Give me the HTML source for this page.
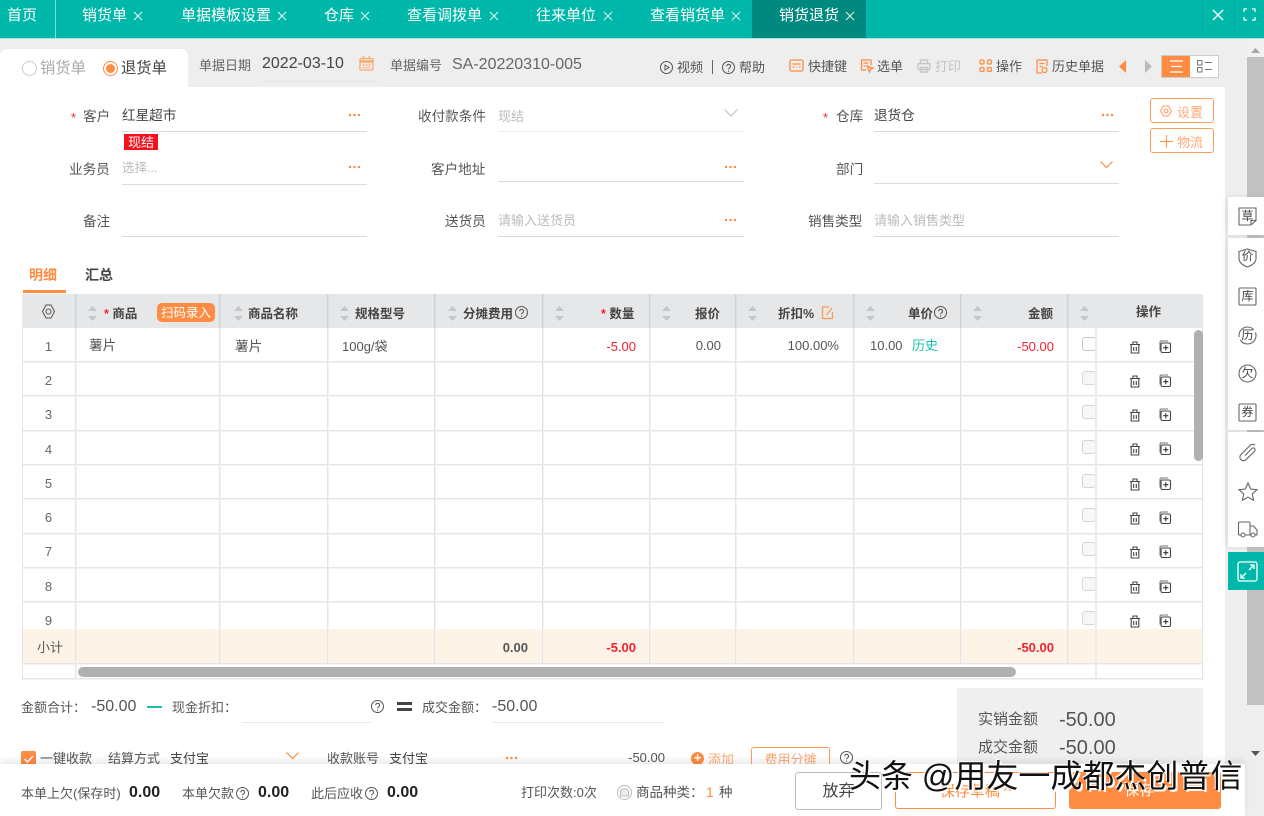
<!DOCTYPE html>
<html lang="zh"><head><meta charset="utf-8"><title>销货退货</title>
<style>
html,body{margin:0;padding:0}
body{width:1264px;height:816px;overflow:hidden;position:relative;background:#eee;font-family:"Liberation Sans","Noto Sans CJK SC",sans-serif;font-size:13px;color:#555}
.a,.t,.r,.c{position:absolute}
.t,.r,.c{white-space:nowrap;line-height:20px}
.r{text-align:right}.c{text-align:center}
.lb{font-size:13.600px}
.tab{position:absolute;top:0;height:38px;line-height:32px;color:#fff;font-size:15px;white-space:nowrap}
.ln{position:absolute;height:1px;background:#dcdcdc}
.h{position:absolute;height:2px;background:linear-gradient(#e6e6e6 50%,#f3f3f3 50%);left:22px;width:1181px}
.v{position:absolute;width:2px;top:294px;height:369px;background:linear-gradient(#cfd1d3 34px,#e4e4e4 34px) 0 0/1px 100% no-repeat,linear-gradient(#dcdde0 34px,#f2f2f2 34px) 1px 0/1px 100% no-repeat}
.th{position:absolute;top:304px;font-weight:bold;color:#444;font-size:12.500px;line-height:20px;white-space:nowrap}
.sort{position:absolute;top:306px;width:9px;height:15px}
.n{position:absolute;left:22px;width:53px;text-align:center;color:#666;line-height:20px}
.red{color:#f5222d}.or{color:#ff8c42}.gr{color:#bbb}
.dots{position:absolute;width:13px;height:4px;background:radial-gradient(circle at 2px 2px,#ff8c42 1.100px,transparent 1.400px) 0 0/4.500px 4px repeat-x}
.cb{position:absolute;left:1082px;width:14px;height:14px;border:1px solid #d5d5d5;border-radius:3px;background:#f7f7f7;box-sizing:border-box}
svg{position:absolute;overflow:visible}
.side{fill:none;stroke:#666;stroke-width:1.100}
.x{fill:none;stroke:#fff;stroke-width:1;opacity:.9}
</style></head><body>
<svg width="0" height="0" style="position:absolute"><defs>
<g id="trash" fill="none" stroke="#444" stroke-width="1.100"><path d="M1 3.500h10M4 3V1h4v2M2.200 3.500V12h7.600V3.500M4.700 6v4M7.300 6v4"/></g>
<g id="copy" fill="none" stroke="#555" stroke-width="1.100"><path d="M2 10.500V2.500a1.500 1.500 0 0 1 1.500-1.500H10" stroke="#777"/><rect x="3" y="3" width="9.500" height="9.500" rx="1.500" fill="#fff" stroke="#444"/><path d="M5.300 7.700h5M7.800 5.300v5" stroke="#333"/></g>
<g id="sortg"><path d="M4.500 0L9 5H0z" fill="#c4c6c9"/><path d="M4.500 15L9 10H0z" fill="#c4c6c9"/></g>
<g id="q" fill="none" stroke="#555" stroke-width="1"><circle cx="6.500" cy="6.500" r="6"/><path d="M4.700 5.200a1.900 1.900 0 1 1 2.800 1.700c-.7.400-1 .7-1 1.500M6.500 9.600v1.100"/></g>
<g id="tx"><path class="x" d="M0 0l8 8M8 0L0 8"/></g>
</defs></svg>

<!-- top bar -->
<div class="a" style="left:0;top:0;width:1264px;height:38px;background:#00b8a9"></div>
<div class="a" style="left:0;top:38px;width:1264px;height:1px;background:#a9e3dd"></div>
<div class="a" style="left:55px;top:0;width:1px;height:38px;background:#7fdcd4"></div>
<div class="a" style="left:752px;top:0;width:114px;height:38px;background:#00897e"></div>
<div class="a" style="left:1202px;top:0;width:1px;height:38px;background:#0aa99b"></div>
<div class="a" style="left:1234px;top:0;width:1px;height:38px;background:#0aa99b"></div>
<div class="tab" style="left:7px">首页</div>
<div class="tab" style="left:82px">销货单</div><svg style="left:134px;top:12px" width="8" height="8"><use href="#tx"/></svg>
<div class="tab" style="left:181px">单据模板设置</div><svg style="left:278px;top:12px" width="8" height="8"><use href="#tx"/></svg>
<div class="tab" style="left:324px">仓库</div><svg style="left:361px;top:12px" width="8" height="8"><use href="#tx"/></svg>
<div class="tab" style="left:407px">查看调拨单</div><svg style="left:490px;top:12px" width="8" height="8"><use href="#tx"/></svg>
<div class="tab" style="left:536px">往来单位</div><svg style="left:604px;top:12px" width="8" height="8"><use href="#tx"/></svg>
<div class="tab" style="left:650px">查看销货单</div><svg style="left:732px;top:12px" width="8" height="8"><use href="#tx"/></svg>
<div class="tab" style="left:779px">销货退货</div><svg style="left:846px;top:12px" width="8" height="8"><use href="#tx"/></svg>
<svg style="left:1212px;top:9px" width="12" height="12" fill="none" stroke="#fff" stroke-width="1.300"><path d="M1 1l10 10M11 1L1 11"/></svg>
<svg style="left:1243px;top:8px" width="13" height="13" fill="none" stroke="#fff" stroke-width="1.200"><path d="M1 4V1h3M9 1h3v3M12 9v3H9M4 12H1V9"/></svg>

<!-- page scrollbar -->
<div class="a" style="left:1247px;top:39px;width:17px;height:18px;background:#f1f1f1"></div>
<div class="a" style="left:1247px;top:57px;width:17px;height:648px;background:#c1c1c1"></div>
<svg style="left:1251px;top:48px" width="9" height="5"><path d="M4.500 0L9 5H0z" fill="#a5a5a5"/></svg>
<svg style="left:1251px;top:751px" width="9" height="5"><path d="M4.500 5L9 0H0z" fill="#555"/></svg>

<!-- main panel -->
<div class="a" style="left:0;top:87px;width:1225px;height:680px;background:#fff"></div>
<div class="a" style="left:0;top:49px;width:188px;height:45px;background:#fff;border-radius:7px 7px 0 0"></div>

<!-- toolbar -->
<div class="a" style="left:22px;top:61px;width:13px;height:13px;border:1px solid #ccc;border-radius:50%"></div>
<div class="t" style="left:40px;top:59px;font-size:15.300px;color:#aaa">销货单</div>
<div class="a" style="left:103px;top:61px;width:13px;height:13px;border:1px solid #ff8c42;border-radius:50%"></div>
<div class="a" style="left:106px;top:64px;width:9px;height:9px;background:#ff8c42;border-radius:50%"></div>
<div class="t" style="left:121px;top:59px;font-size:15.300px;color:#444">退货单</div>
<div class="t" style="left:199px;top:56px;color:#666">单据日期</div>
<div class="t" style="left:262px;top:54px;font-size:16px;color:#444">2022-03-10</div>
<div class="ln" style="left:261px;top:81px;width:118px;background:#e8e8e8"></div>
<svg style="left:359px;top:56px" width="15" height="15" fill="none" stroke="#ffa86b" stroke-width="1.300"><rect x="1" y="2.500" width="13" height="11.500" rx="1"/><path d="M1 5.500h13" stroke-width="2.500"/><path d="M4.500 0v3M10.500 0v3M3.500 9h8M3.500 11.500h8" stroke-dasharray="2 1"/></svg>
<div class="t" style="left:390px;top:56px;color:#666">单据编号</div>
<div class="t" style="left:452px;top:55px;font-size:16px;color:#666">SA-20220310-005</div>

<svg style="left:660px;top:61px" width="13" height="13" fill="none" stroke="#555"><circle cx="6.500" cy="6.500" r="6"/><path d="M5 4l4 2.500L5 9z"/></svg>
<div class="t" style="left:677px;top:58px">视频</div>
<div class="a" style="left:712px;top:60px;width:1px;height:14px;background:#666"></div>
<svg style="left:722px;top:61px" width="13" height="13"><use href="#q"/></svg>
<div class="t" style="left:739px;top:58px">帮助</div>
<svg style="left:789px;top:59px" width="15" height="14" fill="none" stroke="#ff8c42" stroke-width="1.300"><rect x="1" y="1" width="13" height="11" rx="1.500"/><path d="M3.500 5h8M3.500 8h2M7 8h1M10 8h1.500"/></svg>
<div class="t" style="left:808px;top:57px">快捷键</div>
<svg style="left:860px;top:59px" width="14" height="14" fill="none" stroke="#ff8c42" stroke-width="1.300"><path d="M6 11H1.500V1H11v5M3.500 4h5M3.500 7h2"/><path d="M7 7l6 2.200-2.400 1L9.500 13z"/></svg>
<div class="t" style="left:877px;top:57px">选单</div>
<svg style="left:917px;top:59px" width="14" height="14" fill="none" stroke="#c8c8c8" stroke-width="1.500"><rect x="1" y="4.500" width="12" height="6" rx="1.500"/><path d="M3.500 4.500V1h7v3.500M3.500 8.500h7V13h-7z"/></svg>
<div class="t" style="left:935px;top:57px;color:#c4c4c4">打印</div>
<svg style="left:979px;top:59px" width="14" height="14" fill="none" stroke="#ff8c42" stroke-width="1.300"><rect x="1" y="1" width="4" height="4" rx="1.200"/><rect x="8.500" y="1" width="4" height="4" rx="1.200"/><rect x="1" y="8.500" width="4" height="4" rx="1.200"/><rect x="8.500" y="8.500" width="4" height="4" rx="1.200"/></svg>
<div class="t" style="left:996px;top:57px">操作</div>
<svg style="left:1036px;top:59px" width="12" height="15" fill="none" stroke="#ff8c42" stroke-width="1.200"><path d="M1 1h10v6M1 1v13h5M3.500 4.500h5M3.500 7.500h3"/><circle cx="8.500" cy="11" r="2.500"/></svg>
<div class="t" style="left:1052px;top:57px">历史单据</div>
<svg style="left:1119px;top:60px" width="8" height="13"><path d="M7 0v13L0 6.500z" fill="#ff8c42"/></svg>
<svg style="left:1145px;top:60px" width="8" height="13"><path d="M0 0v13l7-6.500z" fill="#bbb"/></svg>
<div class="a" style="left:1161px;top:55px;width:58px;height:23px;background:#ccc"></div>
<div class="a" style="left:1162px;top:56px;width:28px;height:21px;background:#ff8c42"></div>
<div class="a" style="left:1190px;top:56px;width:28px;height:21px;background:#fff"></div>
<svg style="left:1170px;top:60px" width="13" height="13" stroke="#fff" stroke-width="1.200"><path d="M0 1h13M1 6.500h11M0 12h13"/></svg>
<svg style="left:1197px;top:60px" width="15" height="13" fill="none" stroke="#777"><rect x=".5" y=".5" width="4.500" height="4.500"/><rect x=".5" y="7.500" width="4.500" height="4.500"/><path d="M8 2.500h7M8 9.500h7"/></svg>

<!-- form -->
<div class="t red" style="left:71px;top:108px">*</div>
<div class="t lb" style="left:83px;top:107px">客户</div>
<div class="t lb" style="left:122px;top:106px;color:#444">红星超市</div>
<div class="dots" style="left:348px;top:113px"></div>
<div class="ln" style="left:122px;top:131px;width:245px"></div>
<div class="a" style="left:124px;top:134px;width:34px;height:16px;background:#f5101e;color:#fff;text-align:center;line-height:17px">现结</div>
<div class="t lb" style="left:69px;top:160px">业务员</div>
<div class="t gr" style="left:122px;top:158px;font-size:12.500px">选择...</div>
<div class="dots" style="left:348px;top:165px"></div>
<div class="ln" style="left:122px;top:184px;width:245px"></div>
<div class="t lb" style="left:83px;top:212px">备注</div>
<div class="ln" style="left:122px;top:236px;width:245px"></div>

<div class="t lb" style="left:418px;top:107px">收付款条件</div>
<div class="t gr" style="left:498px;top:107px">现结</div>
<svg style="left:724px;top:109px" width="14" height="8" fill="none" stroke="#c4c4c4" stroke-width="1.200"><path d="M.5.500l6.500 6.500 6.500-6.500"/></svg>
<div class="ln" style="left:498px;top:131px;width:246px;background:#eee"></div>
<div class="t lb" style="left:431px;top:160px">客户地址</div>
<div class="dots" style="left:724px;top:165px"></div>
<div class="ln" style="left:498px;top:181px;width:246px"></div>
<div class="t lb" style="left:445px;top:212px">送货员</div>
<div class="t gr" style="left:498px;top:211px">请输入送货员</div>
<div class="dots" style="left:724px;top:218px"></div>
<div class="ln" style="left:498px;top:236px;width:246px"></div>

<div class="t red" style="left:823px;top:108px">*</div>
<div class="t lb" style="left:836px;top:107px">仓库</div>
<div class="t lb" style="left:874px;top:106px;color:#444">退货仓</div>
<div class="dots" style="left:1101px;top:113px"></div>
<div class="ln" style="left:874px;top:131px;width:245px"></div>
<div class="t lb" style="left:836px;top:160px">部门</div>
<svg style="left:1100px;top:161px" width="13" height="8" fill="none" stroke="#ff8c42" stroke-width="1.200"><path d="M.5.500l6 6 6-6"/></svg>
<div class="ln" style="left:874px;top:183px;width:245px"></div>
<div class="t lb" style="left:808px;top:212px">销售类型</div>
<div class="t gr" style="left:874px;top:211px">请输入销售类型</div>
<div class="ln" style="left:874px;top:236px;width:245px"></div>

<div class="a" style="left:1150px;top:98px;width:64px;height:25px;box-sizing:border-box;border:1px solid #ff9c5c;border-radius:3px"></div>
<svg style="left:1160px;top:105px" width="12" height="12" fill="none" stroke="#ff9c5c"><path d="M3.500 1h5L11.500 6l-3 5h-5L.5 6z"/><circle cx="6" cy="6" r="2"/></svg>
<div class="t" style="left:1177px;top:103px;color:#ffa873">设置</div>
<div class="a" style="left:1150px;top:128px;width:64px;height:25px;box-sizing:border-box;border:1px solid #ff9c5c;border-radius:3px"></div>
<svg style="left:1160px;top:135px" width="13" height="13" stroke="#ff9c5c" stroke-width="1.200"><path d="M0 6.500h13M6.500 0v13"/></svg>
<div class="t" style="left:1177px;top:133px;color:#ffa873">物流</div>

<!-- detail tabs -->
<div class="t or" style="left:29px;top:265px;font-size:14px;font-weight:bold">明细</div>
<div class="t" style="left:85px;top:265px;font-size:14px;font-weight:bold;color:#444">汇总</div>
<div class="a" style="left:23px;top:290px;width:43px;height:3px;background:#ff8c42"></div>

<!-- table -->
<div class="a" style="left:22px;top:294px;width:1181px;height:34px;background:#e6e7e9"></div>
<div class="a" style="left:22px;top:629px;width:1181px;height:34px;background:#fdf3e6"></div>
<div class="h" style="top:361px"></div><div class="h" style="top:395px"></div><div class="h" style="top:430px"></div><div class="h" style="top:464px"></div><div class="h" style="top:498px"></div><div class="h" style="top:533px"></div><div class="h" style="top:567px"></div><div class="h" style="top:601px"></div><div class="h" style="top:663px"></div><div class="h" style="top:678px"></div>
<div class="a" style="left:22px;top:328px;width:1px;height:352px;background:#e4e4e4"></div>
<div class="v" style="left:75px;height:386px"></div>
<div class="v" style="left:219px"></div><div class="v" style="left:327px"></div><div class="v" style="left:434px"></div><div class="v" style="left:542px"></div><div class="v" style="left:649px"></div><div class="v" style="left:735px"></div><div class="v" style="left:853px"></div><div class="v" style="left:960px"></div><div class="v" style="left:1067px"></div>
<div class="a" style="left:1202px;top:328px;width:1px;height:352px;background:#e4e4e4"></div>

<svg style="left:41px;top:304px" width="15" height="15" fill="none" stroke="#555"><path d="M5 1h5l3.500 6.500L10 14H5L1.500 7.500z"/><circle cx="7.500" cy="7.500" r="2.500"/></svg>
<svg class="sort" style="left:88px"><use href="#sortg"/></svg>
<svg class="sort" style="left:234px"><use href="#sortg"/></svg>
<svg class="sort" style="left:340px"><use href="#sortg"/></svg>
<svg class="sort" style="left:448px"><use href="#sortg"/></svg>
<svg class="sort" style="left:555px"><use href="#sortg"/></svg>
<svg class="sort" style="left:662px"><use href="#sortg"/></svg>
<svg class="sort" style="left:748px"><use href="#sortg"/></svg>
<svg class="sort" style="left:866px"><use href="#sortg"/></svg>
<svg class="sort" style="left:973px"><use href="#sortg"/></svg>
<svg class="sort" style="left:1080px"><use href="#sortg"/></svg>

<div class="th" style="left:104px"><span class="red">*</span> 商品</div>
<div class="a" style="left:157px;top:303px;width:58px;height:19px;background:#ff8c42;border-radius:5px;color:#fff;text-align:center;line-height:20px;font-size:12.500px">扫码录入</div>
<div class="th" style="left:248px">商品名称</div>
<div class="th" style="left:355px">规格型号</div>
<div class="th" style="left:463px">分摊费用</div>
<svg style="left:515px;top:306px" width="13" height="13"><use href="#q"/></svg>
<div class="th" style="left:601px"><span class="red">*</span> 数量</div>
<div class="th" style="left:695px">报价</div>
<div class="th" style="left:778px">折扣%</div>
<svg style="left:821px;top:306px" width="13" height="13" fill="none" stroke="#ff9c5c" stroke-width="1.300"><path d="M11.500 6v6.500h-10V1H8M5.500 9L11 2"/></svg>
<div class="th" style="left:908px">单价</div>
<svg style="left:934px;top:306px" width="13" height="13"><use href="#q"/></svg>
<div class="th" style="left:1028px">金额</div>

<div class="n" style="top:337px">1</div><div class="n" style="top:371px">2</div><div class="n" style="top:405px">3</div><div class="n" style="top:440px">4</div><div class="n" style="top:474px">5</div><div class="n" style="top:508px">6</div><div class="n" style="top:542px">7</div><div class="n" style="top:577px">8</div><div class="n" style="top:611px">9</div>
<div class="t lb" style="left:89px;top:336px">薯片</div>
<div class="t lb" style="left:235px;top:337px">薯片</div>
<div class="t" style="left:342px;top:337px">100g/袋</div>
<div class="r red" style="left:560px;width:76px;top:337px">-5.00</div>
<div class="r" style="left:660px;width:61px;top:336px">0.00</div>
<div class="r" style="left:760px;width:79px;top:336px">100.00%</div>
<div class="t" style="left:870px;top:336px">10.00</div>
<div class="t" style="left:912px;top:336px;color:#17bfae">历史</div>
<div class="r red" style="left:980px;width:74px;top:337px">-50.00</div>
<div class="t" style="left:37px;top:638px">小计</div>
<div class="r" style="left:460px;width:68px;top:638px;font-weight:bold">0.00</div>
<div class="r red" style="left:560px;width:76px;top:638px;font-weight:bold">-5.00</div>
<div class="r red" style="left:980px;width:74px;top:638px;font-weight:bold">-50.00</div>

<div class="cb" style="top:337px;background:#fff;border-color:#c8c8c8"></div><div class="cb" style="top:371px"></div><div class="cb" style="top:405px"></div><div class="cb" style="top:440px"></div><div class="cb" style="top:474px"></div><div class="cb" style="top:508px"></div><div class="cb" style="top:542px"></div><div class="cb" style="top:577px"></div><div class="cb" style="top:611px"></div>
<div class="a" style="left:1095px;top:294px;width:2px;height:386px;background:#ececec"></div>
<div class="a" style="left:1095px;top:294px;width:108px;height:34px;background:#e6e7e9"></div>
<div class="th" style="left:1136px;top:302px">操作</div>

<svg style="left:1129px;top:341px" width="12" height="13"><use href="#trash"/></svg><svg style="left:1158px;top:340px" width="13" height="13"><use href="#copy"/></svg>
<svg style="left:1129px;top:375px" width="12" height="13"><use href="#trash"/></svg><svg style="left:1158px;top:374px" width="13" height="13"><use href="#copy"/></svg>
<svg style="left:1129px;top:409px" width="12" height="13"><use href="#trash"/></svg><svg style="left:1158px;top:408px" width="13" height="13"><use href="#copy"/></svg>
<svg style="left:1129px;top:443px" width="12" height="13"><use href="#trash"/></svg><svg style="left:1158px;top:442px" width="13" height="13"><use href="#copy"/></svg>
<svg style="left:1129px;top:478px" width="12" height="13"><use href="#trash"/></svg><svg style="left:1158px;top:477px" width="13" height="13"><use href="#copy"/></svg>
<svg style="left:1129px;top:512px" width="12" height="13"><use href="#trash"/></svg><svg style="left:1158px;top:511px" width="13" height="13"><use href="#copy"/></svg>
<svg style="left:1129px;top:546px" width="12" height="13"><use href="#trash"/></svg><svg style="left:1158px;top:545px" width="13" height="13"><use href="#copy"/></svg>
<svg style="left:1129px;top:581px" width="12" height="13"><use href="#trash"/></svg><svg style="left:1158px;top:580px" width="13" height="13"><use href="#copy"/></svg>
<svg style="left:1129px;top:615px" width="12" height="13"><use href="#trash"/></svg><svg style="left:1158px;top:614px" width="13" height="13"><use href="#copy"/></svg>
<div class="a" style="left:1097px;top:629px;width:105px;height:34px;background:#fdf3e6"></div>

<div class="a" style="left:1194px;top:330px;width:9px;height:131px;background:#b0b0b0;border-radius:5px"></div>
<div class="a" style="left:78px;top:667px;width:938px;height:10px;background:#b0b0b0;border-radius:5px"></div>

<!-- totals -->
<div class="t" style="left:21px;top:698px">金额合计：</div>
<div class="t" style="left:91px;top:697px;font-size:16px">-50.00</div>
<div class="a" style="left:147px;top:706px;width:15px;height:2px;background:#17bfae"></div>
<div class="t" style="left:172px;top:698px">现金折扣：</div>
<div class="ln" style="left:242px;top:722px;width:129px;background:#e8e8e8"></div>
<svg style="left:371px;top:700px" width="14" height="14"><use href="#q"/></svg>
<div class="a" style="left:397px;top:702px;width:15px;height:3px;background:#444"></div>
<div class="a" style="left:397px;top:708px;width:15px;height:3px;background:#444"></div>
<div class="t" style="left:422px;top:698px">成交金额：</div>
<div class="t" style="left:492px;top:697px;font-size:16px">-50.00</div>
<div class="ln" style="left:492px;top:722px;width:172px;background:#e8e8e8"></div>

<div class="a" style="left:21px;top:751px;width:15px;height:15px;background:#ff8c42;border-radius:2px"></div>
<svg style="left:24px;top:755px" width="10" height="8" fill="none" stroke="#fff" stroke-width="1.500"><path d="M.5 4l3 3 5.500-6"/></svg>
<div class="t" style="left:40px;top:749px">一键收款</div>
<div class="t" style="left:108px;top:749px">结算方式</div>
<div class="t" style="left:170px;top:749px;color:#444">支付宝</div>
<svg style="left:286px;top:752px" width="13" height="8" fill="none" stroke="#ff8c42" stroke-width="1.200"><path d="M.5.500l6 6 6-6"/></svg>
<div class="t" style="left:327px;top:749px">收款账号</div>
<div class="t" style="left:389px;top:749px;color:#444">支付宝</div>
<div class="dots" style="left:505px;top:756px"></div>
<div class="r" style="left:600px;width:65px;top:748px">-50.00</div>
<div class="a" style="left:691px;top:752px;width:13px;height:13px;background:#ff8c42;border-radius:50%;color:#fff;text-align:center;line-height:12px;font-weight:bold">+</div>
<div class="t" style="left:708px;top:750px;color:#ffa873">添加</div>
<div class="a" style="left:751px;top:747px;width:79px;height:30px;box-sizing:border-box;border:1px solid #ff9c5c;border-radius:3px;color:#ffa873;text-align:center;line-height:23px">费用分摊</div>
<svg style="left:840px;top:751px" width="15" height="15"><use href="#q"/></svg>

<div class="a" style="left:957px;top:688px;width:246px;height:80px;background:#efefef"></div>
<div class="t" style="left:978px;top:710px;font-size:15px">实销金额</div>
<div class="t" style="left:1059px;top:708px;font-size:20px;line-height:24px">-50.00</div>
<div class="t" style="left:978px;top:738px;font-size:15px">成交金额</div>
<div class="t" style="left:1059px;top:736px;font-size:20px;line-height:24px">-50.00</div>

<!-- bottom bar -->
<div class="a" style="left:0;top:764px;width:1245px;height:52px;background:#fff;box-shadow:0 -4px 6px rgba(0,0,0,.08)"></div>
<div class="t" style="left:21px;top:784px">本单上欠(保存时)</div>
<div class="t" style="left:129px;top:783px;font-size:16px;font-weight:bold;color:#222">0.00</div>
<div class="t" style="left:182px;top:784px">本单欠款</div>
<svg style="left:236px;top:787px" width="13" height="13"><use href="#q"/></svg>
<div class="t" style="left:258px;top:783px;font-size:16px;font-weight:bold;color:#222">0.00</div>
<div class="t" style="left:311px;top:784px">此后应收</div>
<svg style="left:365px;top:787px" width="13" height="13"><use href="#q"/></svg>
<div class="t" style="left:387px;top:783px;font-size:16px;font-weight:bold;color:#222">0.00</div>
<div class="t" style="left:521px;top:783px">打印次数:0次</div>
<svg style="left:617px;top:785px" width="15" height="15" fill="none" stroke="#bbb"><circle cx="7.500" cy="7.500" r="7"/><path d="M3.500 11V6l2-2h4l2 2v5z" fill="#eee"/></svg>
<div class="t" style="left:636px;top:783px;font-size:13.500px">商品种类：</div>
<div class="t or" style="left:706px;top:782px;font-size:14px">1</div>
<div class="t" style="left:719px;top:783px;font-size:13.500px">种</div>
<div class="a" style="left:795px;top:772px;width:87px;height:38px;box-sizing:border-box;border:1px solid #bbb;border-radius:3px;text-align:center;line-height:38px;font-size:16px;color:#444">放弃</div>
<div class="a" style="left:895px;top:772px;width:161px;height:37px;box-sizing:border-box;border:1px solid #ff8c42;border-radius:3px;text-align:center;line-height:38px;font-size:15px;color:#ff8c42">保存草稿 ^</div>
<div class="a" style="left:1069px;top:772px;width:152px;height:37px;background:#ff8c42;border-radius:3px;text-align:center;line-height:38px;font-size:15px;color:#fff">保存 ^</div>

<!-- side panel -->
<div class="a" style="left:1228px;top:197px;width:36px;height:38px;background:#fff;box-shadow:-3px 0 6px rgba(0,0,0,.07)"></div>
<div class="a" style="left:1228px;top:238px;width:36px;height:192px;background:#fff;box-shadow:-3px 0 6px rgba(0,0,0,.07)"></div>
<div class="a" style="left:1228px;top:432px;width:36px;height:115px;background:#fff;box-shadow:-3px 0 6px rgba(0,0,0,.07)"></div>
<div class="a" style="left:1228px;top:552px;width:36px;height:38px;background:#00b8a9"></div>
<svg class="side" style="left:1238px;top:207px" width="19" height="19"><path d="M13 18H1V1h17v12.500zM13 18v-4.500h5"/></svg>
<div class="c" style="left:1238px;top:206px;width:19px;font-size:12px;color:#444">草</div>
<svg class="side" style="left:1238px;top:248px" width="19" height="20"><path d="M9.500 1l8.500 2.500v7c0 4-4 7-8.500 8.500C5 17.500 1 14.500 1 10.500v-7z"/></svg>
<div class="c" style="left:1238px;top:247px;width:19px;font-size:11.500px;color:#444">价</div>
<svg class="side" style="left:1238px;top:287px" width="19" height="19"><rect x="1" y="1" width="17" height="17" rx="1"/></svg>
<div class="c" style="left:1238px;top:286px;width:19px;font-size:12px;color:#444">库</div>
<svg class="side" style="left:1238px;top:326px" width="19" height="19"><circle cx="9.500" cy="9.500" r="8.500" stroke-dasharray="22 3"/></svg>
<div class="c" style="left:1238px;top:325px;width:19px;font-size:12px;color:#444">历</div>
<svg class="side" style="left:1238px;top:364px" width="19" height="19"><circle cx="9.500" cy="9.500" r="8.500"/></svg>
<div class="c" style="left:1238px;top:363px;width:19px;font-size:12px;color:#444">欠</div>
<svg class="side" style="left:1238px;top:403px" width="19" height="19"><rect x="1" y="1" width="17" height="17" rx="1"/></svg>
<div class="c" style="left:1238px;top:402px;width:19px;font-size:12px;color:#444">券</div>
<svg class="side" style="left:1239px;top:443px" width="18" height="19"><path d="M6 12.500L13 5.500a1.800 1.800 0 0 1 2.600 2.600L7 16.700a3.600 3.600 0 0 1-5.100-5.100L11 2.500a3.500 3.500 0 0 1 5-.3"/></svg>
<svg class="side" style="left:1238px;top:482px" width="20" height="19"><path d="M10 1l2.700 6 6.300.7-4.700 4.300 1.300 6.300-5.600-3.200-5.600 3.200 1.300-6.300L1 7.700 7.300 7z"/></svg>
<svg class="side" style="left:1238px;top:521px" width="20" height="17"><path d="M3 14H1.500a1 1 0 0 1-1-1V2a1 1 0 0 1 1-1H11a1 1 0 0 1 1 1v12H7M12 5h3.500l3.500 4v5h-2M12 14h1"/><circle cx="5" cy="14" r="2"/><circle cx="15" cy="14" r="2"/></svg>
<svg style="left:1237px;top:561px" width="21" height="21" fill="none" stroke="#fff" stroke-width="1.300"><rect x="1" y="1" width="19" height="19" rx="2"/><path d="M12 9l5-5M13 4h4v4M9 12l-5 5M4 13v4h4"/></svg>

<!-- watermark -->
<div class="t" style="left:849px;top:757px;font-size:32px;line-height:38px;color:#111;text-shadow:2px 2px 0 #fff,-1px -1px 0 #fff">头条 @用友一成都杰创普信</div>
</body></html>
